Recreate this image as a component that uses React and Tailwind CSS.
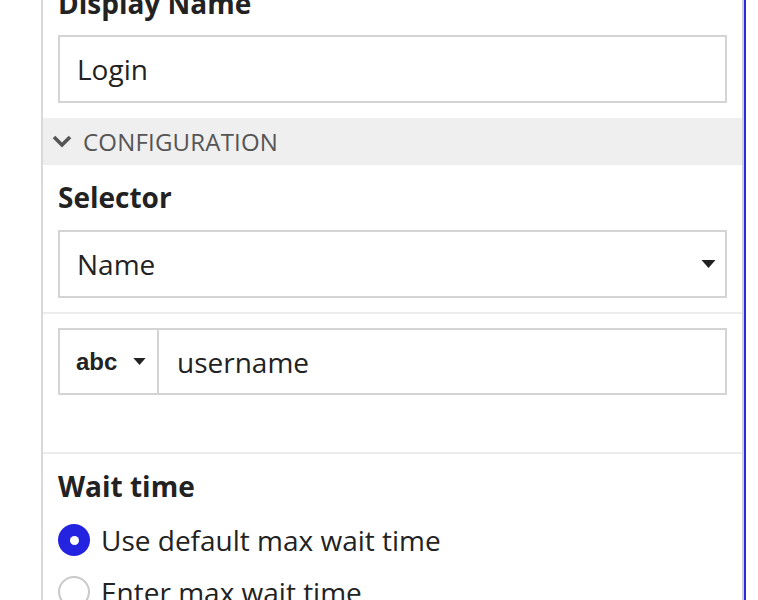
import React from 'react';

const font = { fontFamily: '"Open Sans", "Noto Sans", sans-serif' };

const Caret = ({ className }) => (
  <svg viewBox="0 0 14 8" className={className}>
    <path d="M0 0 H14 L7 8 Z" fill="#222" />
  </svg>
);

const Radio = ({ checked, label }) => (
  <label className="flex items-center h-[52px]">
    {checked ? (
      <span className="w-[32px] h-[32px] rounded-full bg-[#2424e0] flex items-center justify-center shrink-0">
        <span className="w-[9px] h-[9px] rounded-full bg-white" />
      </span>
    ) : (
      <span className="w-[32px] h-[32px] rounded-full border-2 border-[#c9c9c9] bg-white shrink-0" />
    )}
    <span className="ml-[11px] text-[28px] text-[#222]">{label}</span>
  </label>
);

export default function App() {
  return (
    <div className="h-[600px] overflow-hidden bg-white" style={font}>
      <div className="ml-[41px] w-[705px] min-h-[660px] -mt-[15px] flex flex-col border-l-2 border-[#d9d9d9] border-r-2 border-r-[#2a2ad8]">
        <div className="flex-1 border-r-2 border-[#cfcfd6]">
          {/* Display name */}
          <div className="px-[15px]">
            <div className="text-[28px] leading-[37px] font-bold text-[#222]">Display Name</div>
            <div className="mt-[13px] h-[68px] border-2 border-[#d4d4d4] flex items-center px-[17px] text-[28px] text-[#222]">
              Login
            </div>
          </div>

          {/* Configuration section */}
          <div className="mt-[15px] h-[47px] bg-[#efefef] flex items-center pl-[9px]">
            <svg viewBox="0 0 20 13" className="w-[20px] h-[13px]">
              <polyline points="2,2 10,10 18,2" fill="none" stroke="#555" strokeWidth="3.6" />
            </svg>
            <span className="ml-[11px] text-[24px] text-[#555] tracking-[0.2px]">CONFIGURATION</span>
          </div>

          <div className="px-[15px] pt-[14px] pb-[14px]">
            <div className="text-[28px] leading-[37px] font-bold text-[#222]">Selector</div>
            <div className="mt-[14px] h-[68px] border-2 border-[#d4d4d4] flex items-center justify-between pl-[17px] pr-[9px] text-[28px] text-[#222]">
              <span>Name</span>
              <Caret className="w-[15px] h-[8px]" />
            </div>
          </div>

          <div className="h-[2px] bg-[#ececec]" />

          <div className="px-[15px] pt-[14px] pb-[57px]">
            <div className="h-[67px] border-2 border-[#d4d4d4] flex">
              <div className="w-[99px] flex items-center pl-[16px] border-r-2 border-[#d4d4d4]">
                <span className="text-[24px] font-bold text-[#222]" style={{ fontFamily: '"Liberation Sans", Arial, sans-serif' }}>
                  abc
                </span>
                <Caret className="ml-[16px] w-[13px] h-[7px]" />
              </div>
              <div className="flex-1 flex items-center pl-[18px] text-[28px] text-[#222]">username</div>
            </div>
          </div>

          <div className="h-[2px] bg-[#ececec]" />

          {/* Wait time */}
          <div className="px-[15px] pt-[14px]">
            <div className="text-[28px] leading-[37px] font-bold text-[#222]">Wait time</div>
            <div className="mt-[9px]">
              <Radio checked label="Use default max wait time" />
              <Radio label="Enter max wait time" />
            </div>
          </div>
        </div>
      </div>
    </div>
  );
}
